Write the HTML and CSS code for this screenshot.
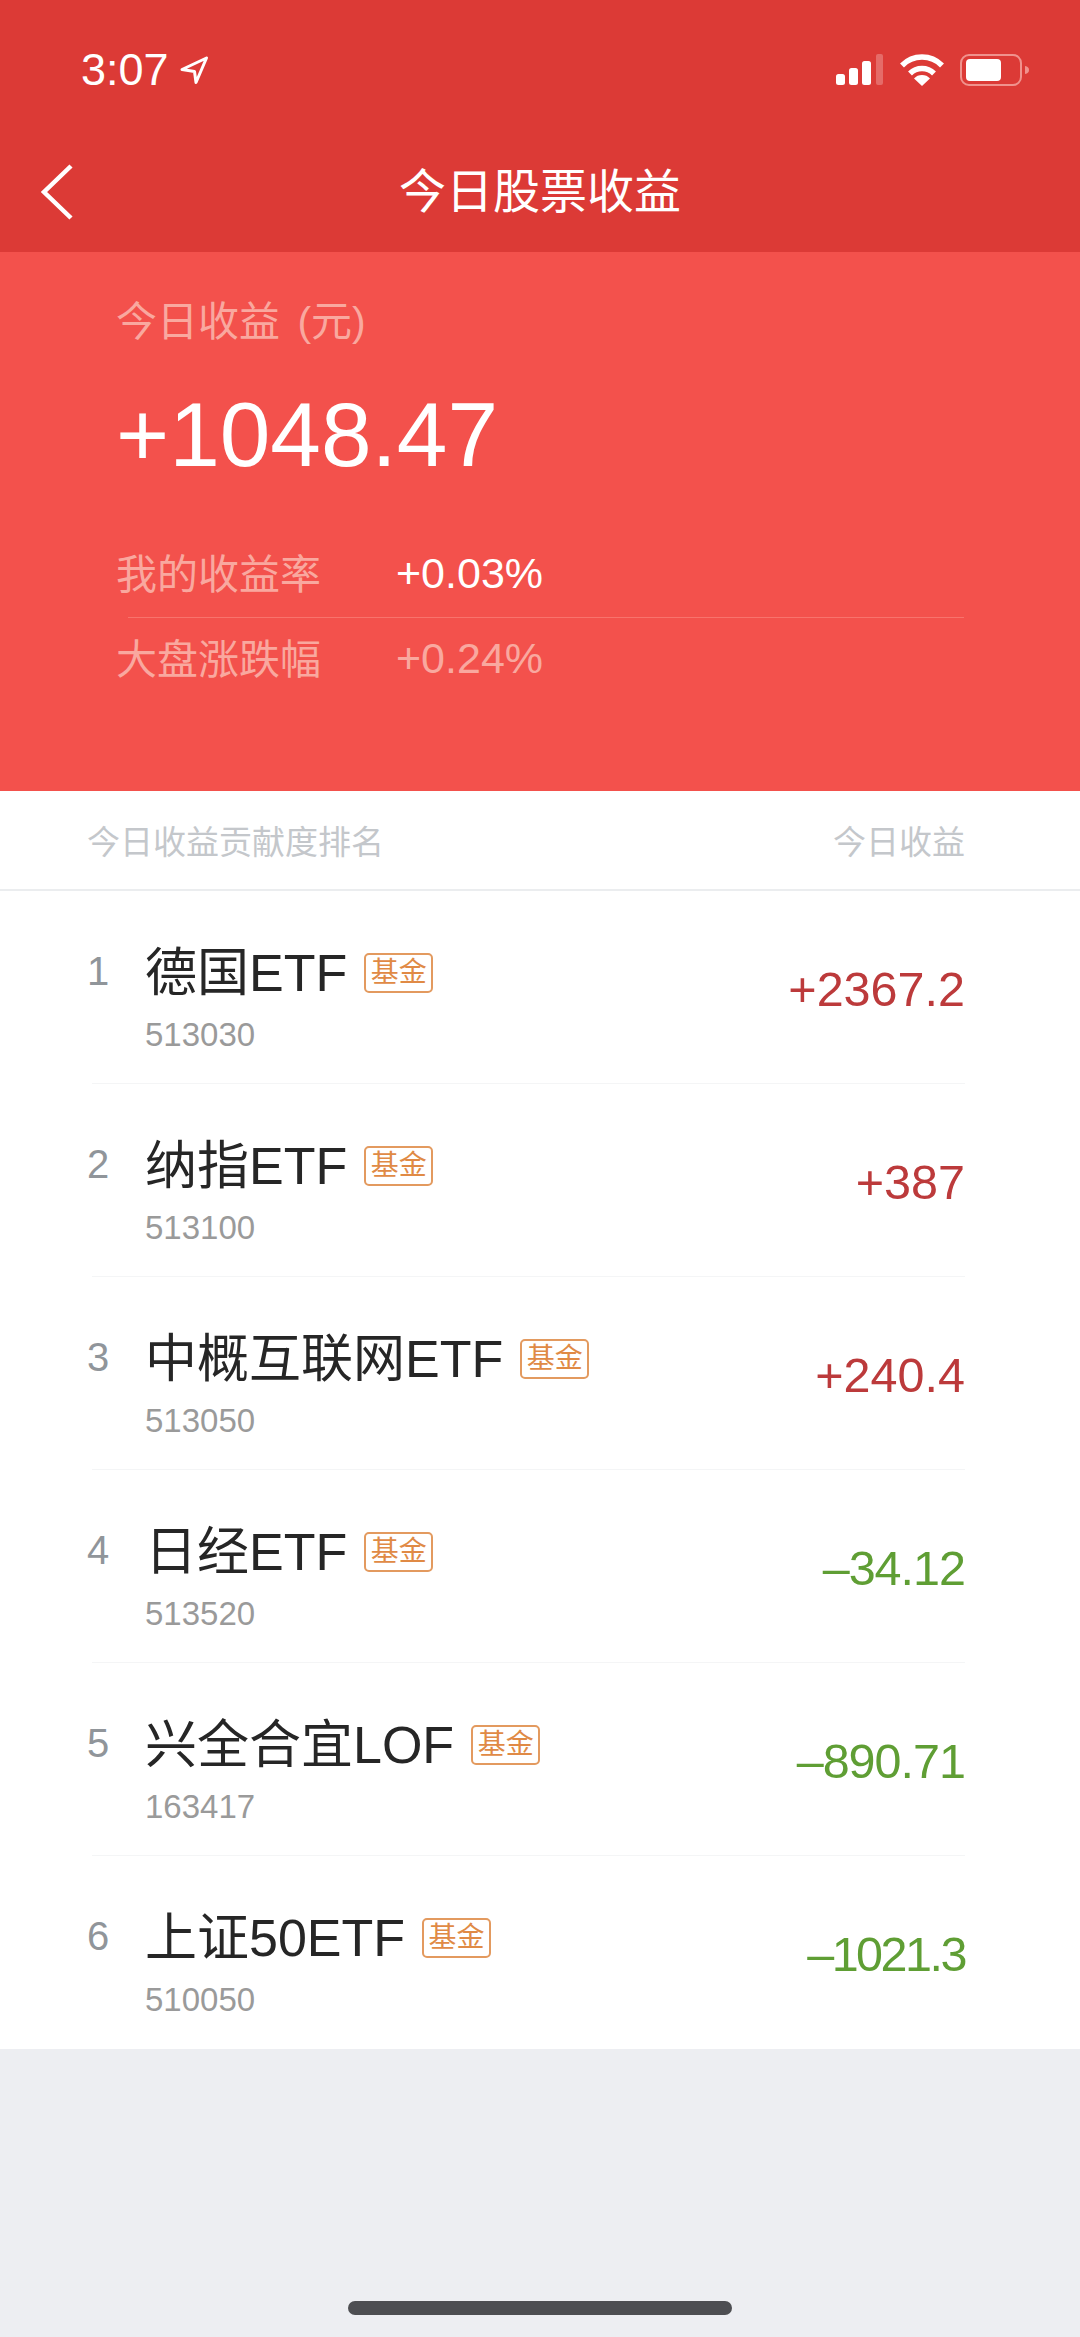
FILE: index.html
```html
<!DOCTYPE html>
<html lang="zh-CN">
<head>
    <meta charset="UTF-8">
    <title>今日股票收益</title>
    <link rel="stylesheet" href="styles.css">
</head>
<body>
<div class="page">
    <header class="top">
        <div class="status">
            <div class="status-left">
                <span class="time">3:07</span>
                <svg class="loc" width="30" height="31" viewBox="0 0 30 31"><path d="M27.500 3 3 14.500 15.500 16.500 17 27.500Z" fill="none" stroke="#fff" stroke-width="3" stroke-linejoin="round"/></svg>
            </div>
            <div class="status-right">
                <svg width="48" height="32" viewBox="0 0 48 32">
                    <rect x="0" y="20" width="9" height="11" rx="2.500" fill="#fff"/>
                    <rect x="13" y="14" width="9" height="17" rx="2.500" fill="#fff"/>
                    <rect x="26" y="7" width="9" height="24" rx="2.500" fill="#fff"/>
                    <rect x="40" y="0" width="7" height="31" rx="2" fill="#fff" opacity=".25"/>
                </svg>
                <svg class="wifi" width="44" height="32" viewBox="0 0 44 32">
                    <path d="M2 11.500a28 28 0 0 1 40 0" fill="none" stroke="#fff" stroke-width="5.500"/>
                    <path d="M10 19.500a17 17 0 0 1 24 0" fill="none" stroke="#fff" stroke-width="5.500"/>
                    <path d="M22 32 14 24.500a11 11 0 0 1 16 0Z" fill="#fff"/>
                </svg>
                <svg class="batt" width="70" height="32" viewBox="0 0 70 32">
                    <rect x="1" y="1" width="60" height="30" rx="8" fill="none" stroke="#f0928d" stroke-width="2"/>
                    <rect x="6" y="5" width="35" height="22" rx="4" fill="#fff"/>
                    <path d="M65 12c3 .5 4 2 4 4s-1 3.500-4 4Z" fill="#f0928d"/>
                </svg>
            </div>
        </div>
        <nav class="nav">
            <svg class="back" width="34" height="56" viewBox="0 0 34 56"><path d="M32 2 5 28l27 26" fill="none" stroke="#fff" stroke-width="4.500"/></svg>
            <div class="nav-title">今日股票收益</div>
        </nav>
    </header>

    <section class="hero">
        <div class="hero-label">今日收益 (元)</div>
        <div class="hero-num">+1048.47</div>
        <div class="hero-rows">
            <div class="hero-row">
                <span class="hero-name">我的收益率</span>
                <span class="hero-val">+0.03%</span>
            </div>
            <div class="hero-line"></div>
            <div class="hero-row">
                <span class="hero-name">大盘涨跌幅</span>
                <span class="hero-val dim">+0.24%</span>
            </div>
        </div>
    </section>

    <section class="rank">
        <div class="rank-head">
            <span>今日收益贡献度排名</span>
            <span>今日收益</span>
        </div>
        <div class="item">
            <span class="no">1</span>
            <div class="info">
                <div class="name">德国ETF<span class="tag">基金</span></div>
                <div class="code">513030</div>
            </div>
            <span class="val up">+2367.2</span>
        </div>
        <div class="item">
            <span class="no">2</span>
            <div class="info">
                <div class="name">纳指ETF<span class="tag">基金</span></div>
                <div class="code">513100</div>
            </div>
            <span class="val up">+387</span>
        </div>
        <div class="item">
            <span class="no">3</span>
            <div class="info">
                <div class="name">中概互联网ETF<span class="tag">基金</span></div>
                <div class="code">513050</div>
            </div>
            <span class="val up">+240.4</span>
        </div>
        <div class="item">
            <span class="no">4</span>
            <div class="info">
                <div class="name">日经ETF<span class="tag">基金</span></div>
                <div class="code">513520</div>
            </div>
            <span class="val down">–34.12</span>
        </div>
        <div class="item">
            <span class="no">5</span>
            <div class="info">
                <div class="name">兴全合宜LOF<span class="tag">基金</span></div>
                <div class="code">163417</div>
            </div>
            <span class="val down">–890.71</span>
        </div>
        <div class="item">
            <span class="no">6</span>
            <div class="info">
                <div class="name">上证50ETF<span class="tag">基金</span></div>
                <div class="code">510050</div>
            </div>
            <span class="val down tight">–1021.3</span>
        </div>
    </section>

    <footer class="bottom">
        <div class="home-bar"></div>
    </footer>
</div>
</body>
</html>
```

FILE: styles.css
```css
*{
    margin: 0;
    padding: 0;
    box-sizing: border-box;
}
body{
    font-family: "Liberation Sans", "Noto Sans CJK SC", sans-serif;
    background: #edeef2;
}
.page{
    display: flex;
    flex-direction: column;
    min-height: 100vh;
}
.top{
    height: 252px;
    background: #dc3a36;
    color: #ffffff;
}
.status{
    display: flex;
    justify-content: space-between;
    align-items: center;
    height: 140px;
    padding: 0 50px 0 81px;
}
.status-left,.status-right{
    display: flex;
    align-items: center;
}
.time{
    font-size: 45px;
    line-height: 50px;
}
.loc{
    margin-left: 10px;
}
.wifi{
    margin-left: 16px;
}
.batt{
    margin-left: 16px;
}
.nav{
    display: grid;
    grid-template-columns: 1fr auto 1fr;
    align-items: center;
    height: 104px;
}
.back{
    margin-left: 39px;
}
.nav-title{
    font-size: 47px;
    line-height: 60px;
}
.hero{
    height: 539px;
    padding: 45px 116px 0;
    background: #f3514c;
}
.hero-label{
    font-size: 41px;
    line-height: 50px;
    word-spacing: 6px;
    color: #f9a89f;
}
.hero-num{
    margin-top: 38px;
    font-size: 91px;
    line-height: 100px;
    color: #ffffff;
}
.hero-rows{
    margin-top: 48px;
}
.hero-row{
    display: flex;
    align-items: center;
    height: 84px;
}
.hero-name{
    width: 280px;
    margin-bottom: 8px;
    font-size: 41px;
    color: #f9a89f;
}
.hero-val{
    margin-bottom: 3px;
    font-size: 43px;
    color: #ffffff;
}
.hero-val.dim{
    color: #f9a89f;
}
.hero-line{
    height: 1px;
    margin: 0 0 0 12px;
    background: #f8736c;
}
.rank{
    background: #ffffff;
}
.rank-head{
    display: flex;
    justify-content: space-between;
    align-items: center;
    height: 100px;
    padding: 0 115px 0 87px;
    border-bottom: 2px solid #ebedef;
    font-size: 33px;
    color: #c4c7cb;
}
.item{
    display: flex;
    align-items: flex-start;
    height: 193px;
    margin: 0 115px 0 92px;
    border-bottom: 1px solid #f4f5f6;
}
.item:last-child{
    border-bottom: none;
}
.no{
    width: 58px;
    margin: 55px 0 0 -5px;
    font-size: 40px;
    line-height: 50px;
    color: #90959a;
}
.info{
    flex: 1;
    padding-top: 50px;
}
.name{
    display: flex;
    align-items: center;
    font-size: 52px;
    line-height: 64px;
    color: #262626;
}
.tag{
    width: 69px;
    height: 40px;
    margin-left: 17px;
    border: 2px solid #e39a5f;
    border-radius: 5px;
    font-size: 28px;
    line-height: 35px;
    text-align: center;
    color: #e08a45;
}
.code{
    margin-top: 10px;
    font-size: 33px;
    line-height: 40px;
    color: #9a9a9a;
}
.val{
    margin-top: 70px;
    font-size: 48.5px;
    line-height: 56px;
}
.up{
    color: #bc3a3b;
}
.down{
    letter-spacing: -1px;
    color: #5f9e34;
}
.tight{
    letter-spacing: -2.5px;
}
.bottom{
    display: flex;
    flex: 1;
    justify-content: center;
    align-items: flex-end;
    padding-bottom: 22px;
}
.home-bar{
    width: 384px;
    height: 14px;
    border-radius: 7px;
    background: #4d4e52;
}
```
